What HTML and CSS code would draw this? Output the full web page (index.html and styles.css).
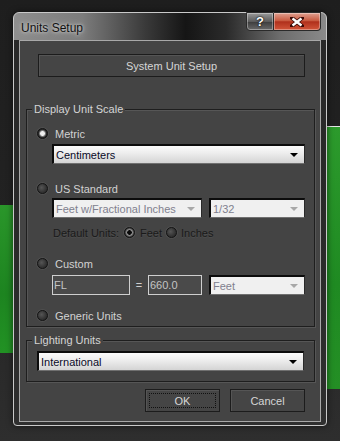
FILE: index.html
```html
<!DOCTYPE html>
<html lang="en">
  <head>
    <meta charset="UTF-8" />
    <title>Units Setup</title>
    <link rel="stylesheet" href="styles.css">
  </head>
  <body>
    <div class="window">
      <div class="titlebar">
        <span class="title">Units Setup</span>
        <div class="caption-buttons">
          <span class="cap help">?</span>
          <span class="cap close">
            <svg width="14" height="10" viewBox="0 0 14 10">
              <path d="M2 1 L12 9 M12 1 L2 9" stroke="#3a0a06" stroke-width="4" stroke-linecap="square" />
              <path d="M2.5 1.5 L11.5 8.5 M11.5 1.5 L2.5 8.5" stroke="#fff" stroke-width="2.4" />
            </svg>
          </span>
        </div>
      </div>

      <div class="client">
        <div class="btn system">System Unit Setup</div>

        <div class="group display">
          <div class="group-title">Display Unit Scale</div>

          <div class="radio-row first">
            <span class="radio checked"></span>
            <span class="label">Metric</span>
          </div>
          <div class="select wide">
            <span>Centimeters</span>
            <span class="arrow"></span>
          </div>

          <div class="radio-row">
            <span class="radio"></span>
            <span class="label">US Standard</span>
          </div>
          <div class="control-row us-row">
            <div class="select disabled frac">
              <span>Feet w/Fractional Inches</span>
              <span class="arrow"></span>
            </div>
            <div class="select disabled small">
              <span>1/32</span>
              <span class="arrow"></span>
            </div>
          </div>
          <div class="default-units">
            <span class="du-label">Default Units:</span>
            <span class="radio checked dark du-feet"></span>
            <span class="du-text">Feet</span>
            <span class="radio dark du-inches"></span>
            <span class="du-text">Inches</span>
          </div>

          <div class="radio-row custom">
            <span class="radio"></span>
            <span class="label">Custom</span>
          </div>
          <div class="control-row custom-row">
            <div class="field fl">FL</div>
            <span class="equals">=</span>
            <div class="field num">660.0</div>
            <div class="select disabled small">
              <span>Feet</span>
              <span class="arrow"></span>
            </div>
          </div>

          <div class="radio-row generic">
            <span class="radio"></span>
            <span class="label">Generic Units</span>
          </div>
        </div>

        <div class="group lighting">
          <div class="group-title">Lighting Units</div>
          <div class="select intl">
            <span>International</span>
            <span class="arrow"></span>
          </div>
        </div>

        <div class="actions">
          <div class="btn ok"><span class="focus">OK</span></div>
          <div class="btn cancel">Cancel</div>
        </div>
      </div>
    </div>
  </body>
</html>
```

FILE: styles.css
```css
body {
  margin: 0;
  height: 441px;
  overflow: hidden;
  font-family: "Liberation Sans", Arial, sans-serif;
  font-size: 11px;
  background:
    linear-gradient(#e6e6e6 0 1px, #2c9a2c 1px, #1f8a22 60%, #248f25) 327px 126px / 13px 263px no-repeat,
    linear-gradient(#2a962a, #1d8420 60%, #229224) 0 205px / 13px 148px no-repeat,
    linear-gradient(#1e1e1e, #222 50%, #2e2e2e 100%);
}
.window {
  margin: 12px 0 0 13px;
  width: 314px;
  height: 414px;
  box-sizing: border-box;
  border: 1px solid #c9c9c9;
  border-radius: 6px 6px 4px 4px;
  background:
    linear-gradient(90deg, #8e8e8e 0, #7c7c7c 22%, #3a3a3a 42%, #151515 55%, #2a2a2a 68%, #6c6c6c 85%, #8a8a8a 100%) 0 0 / 100% 27px no-repeat,
    rgba(50, 50, 50, 0.55);
  box-shadow: 0 0 6px rgba(0, 0, 0, 0.6);
}
.titlebar {
  height: 27px;
  display: flex;
  justify-content: space-between;
  align-items: flex-start;
}
.title {
  margin: 8px 0 0 7px;
  font-size: 12px;
  color: #111;
  text-shadow: 0 0 6px #c8c8c8, 0 0 3px #d8d8d8;
}
.caption-buttons {
  display: flex;
  margin: -1px 5px 0 0;
}
.cap {
  height: 19px;
  display: flex;
  align-items: center;
  justify-content: center;
  box-sizing: border-box;
  border: 1px solid #2a2a2a;
  box-shadow: inset 0 0 0 1px rgba(255, 255, 255, 0.35);
}
.help {
  width: 28px;
  border-radius: 0 0 0 4px;
  background: linear-gradient(#9a9a9a, #5c5c5c 50%, #3c3c3c 51%, #6a6a6a);
  color: #fff;
  font-weight: bold;
  font-size: 13px;
  text-shadow: 0 0 2px #000, 0 0 1px #000;
}
.close {
  width: 47px;
  border-left: none;
  border-radius: 0 0 4px 0;
  background: linear-gradient(#e0a090, #c85a40 45%, #b0301c 52%, #d2563a);
}
.client {
  margin: 0 5px;
  height: 382px;
  box-sizing: border-box;
  border: 1px solid #a8a8a8;
  background: #444;
  color: #d2d2d2;
}
.btn {
  box-sizing: border-box;
  height: 23px;
  display: flex;
  align-items: center;
  justify-content: center;
  border: 1px solid #1c1c1c;
  box-shadow: inset 1px 1px 0 #555;
  background: #454545;
  color: #d6d6d6;
}
.system {
  margin: 13px 0 0 18px;
  width: 267px;
}
.group {
  box-sizing: border-box;
  margin-left: 6px;
  width: 289px;
  border: 1px solid #1e1e1e;
  box-shadow: 1px 1px 0 #565656, inset 1px 1px 0 #565656;
}
.display {
  margin-top: 32px;
  height: 218px;
}
.lighting {
  margin-top: 13px;
  height: 42px;
}
.group-title {
  width: fit-content;
  height: 13px;
  line-height: 13px;
  margin: -7px 0 0 5px;
  padding: 0 2px;
  background: #444;
  color: #d4d4d4;
}
.radio-row {
  display: flex;
  align-items: center;
  height: 13px;
  margin: 18px 0 0 10px;
  gap: 7px;
}
.radio-row.first {
  margin-top: 11px;
}
.radio-row.custom {
  margin-top: 18px;
}
.radio-row.generic {
  margin-top: 14px;
}
.radio {
  flex: none;
  width: 11px;
  height: 11px;
  box-sizing: border-box;
  border-radius: 50%;
  border: 1px solid #141414;
  background: radial-gradient(circle at 40% 40%, #555 0, #333 60%, #262626 100%);
  box-shadow: 0 0 0 1px rgba(90, 90, 90, 0.5);
}
.radio.checked {
  background: radial-gradient(circle, #f0f0f0 0 2px, #9a9a9a 2.6px, #2a2a2a 4px);
}
.radio.checked.dark {
  background: radial-gradient(circle, #0a0a0a 0 2px, #9c9c9c 2.6px, #3a3a3a 4.5px);
}
.label {
  color: #d2d2d2;
}
.select {
  box-sizing: border-box;
  height: 20px;
  display: flex;
  align-items: center;
  justify-content: space-between;
  padding: 0 6px 0 2px;
  border-style: solid;
  border-width: 2px 1px 1px 2px;
  border-color: #0c0c0c #2a2a2a #707070 #0c0c0c;
  background: linear-gradient(#fbfbfb, #ececec 45%, #d4d4d4);
  color: #0a0a28;
  font-size: 11px;
}
.arrow {
  width: 0;
  height: 0;
  border-left: 4px solid transparent;
  border-right: 4px solid transparent;
  border-top: 4px solid #000;
}
.select.disabled {
  background: #f0f0f0;
  color: #80808e;
}
.select.disabled .arrow {
  border-top-color: #a8a8a8;
}
.wide {
  margin: 4px 0 0 25px;
  width: 253px;
}
.control-row {
  display: flex;
  align-items: center;
  margin-left: 25px;
}
.us-row {
  margin-top: 3px;
  gap: 7px;
}
.frac {
  width: 150px;
}
.small {
  width: 96px;
}
.default-units {
  display: flex;
  align-items: center;
  height: 13px;
  margin: 8px 0 0 26px;
  color: #1a1a1a;
  text-shadow: 0 1px 0 rgba(100, 100, 100, 0.3);
}
.du-feet {
  margin: 0 5px 0 5px;
}
.du-inches {
  margin: 0 4px 0 4px;
}
.custom-row {
  margin-top: 5px;
}
.field {
  box-sizing: border-box;
  height: 20px;
  display: flex;
  align-items: center;
  padding-left: 1px;
  border: 1px solid #cfcfcf;
  background: #4a4a4a;
  color: #c4c4c4;
}
.fl {
  width: 78px;
}
.equals {
  width: 18px;
  text-align: center;
  color: #cfcfcf;
}
.num {
  width: 54px;
  margin-right: 7px;
}
.intl {
  margin: 4px 0 0 10px;
  width: 267px;
}
.actions {
  display: flex;
  justify-content: flex-end;
  gap: 10px;
  margin: 7px 15px 0 0;
}
.ok,
.cancel {
  width: 75px;
}
.focus {
  box-sizing: border-box;
  width: 67px;
  height: 15px;
  display: flex;
  align-items: center;
  justify-content: center;
  border: 1px dotted #111;
}
```
